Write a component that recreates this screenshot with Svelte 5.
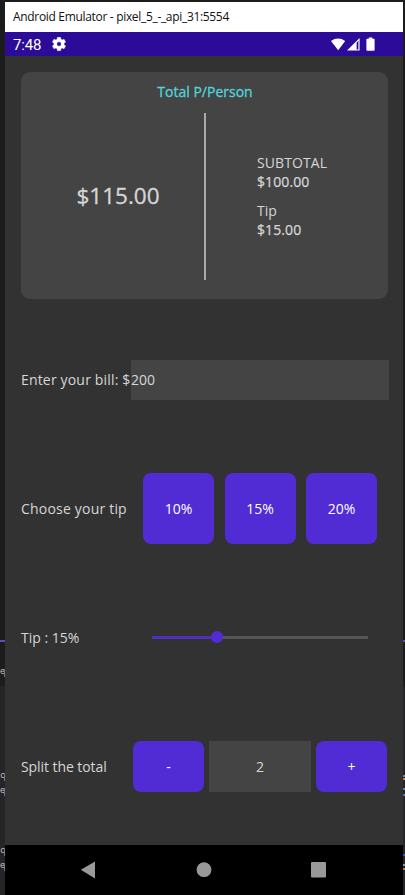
<script>
  const tips = [10, 15, 20];
  let bill = $state('200');
  let tip = $state(15);
  let people = $state(2);
  const fragments = [
    { t: 'e', y: 664 },
    { t: 'c', y: 768 },
    { t: 'e', y: 783 },
    { t: 'c', y: 843 },
    { t: 'e', y: 858 }
  ];
  const flecks = [
    { y: 775, c: '#7486a0' },
    { y: 778, c: '#b98a60' },
    { y: 788, c: '#7183a5' },
    { y: 794, c: '#60758e' },
    { y: 854, c: '#355ca0' },
    { y: 864, c: '#8598ab' },
    { y: 868, c: '#b87950' }
  ];
</script>

<div class="desktop">
  <div class="editor">
    <i class="pane"></i>
    <i class="rule"></i>
    {#each fragments as f}
      <span style="top:{f.y}px">{f.t}</span>
      <i class="stem" style="top:{f.y + 5}px"></i>
    {/each}
    {#each flecks as f}<i class="fleck" style="top:{f.y}px;background:{f.c}"></i>{/each}
  </div>

  <div class="window">
    <header class="title"><span>Android Emulator - pixel_5_-_api_31:5554</span></header>
    <div class="status">
      <span class="clock">7:48</span>
      <svg class="gear" width="14" height="14" viewBox="2 2 20 20"><path fill="#fff" stroke="#fff" stroke-width=".6" fill-rule="evenodd" d="M19.14 12.94c.04-.3.06-.61.06-.94 0-.32-.02-.64-.07-.94l2.03-1.58c.18-.14.23-.41.12-.61l-1.92-3.32c-.12-.22-.37-.29-.59-.22l-2.39.96c-.5-.38-1.03-.7-1.62-.94l-.36-2.54c-.04-.24-.24-.41-.48-.41h-3.84c-.24 0-.43.17-.47.41l-.36 2.54c-.59.24-1.13.57-1.62.94l-2.39-.96c-.22-.08-.47 0-.59.22L2.74 8.87c-.12.21-.08.47.12.61l2.03 1.58c-.05.3-.09.63-.09.94s.02.64.07.94l-2.03 1.58c-.18.14-.23.41-.12.61l1.92 3.32c.12.22.37.29.59.22l2.39-.96c.5.38 1.03.7 1.62.94l.36 2.54c.05.24.24.41.48.41h3.84c.24 0 .44-.17.47-.41l.36-2.54c.59-.24 1.13-.56 1.62-.94l2.39.96c.22.08.47 0 .59-.22l1.92-3.32c.12-.22.07-.47-.12-.61l-2.01-1.58zM12 15.2a3.2 3.2 0 1 1 0-6.4 3.2 3.2 0 0 1 0 6.4z" /></svg>
      <svg class="signals" width="46" height="14" viewBox="0 0 46 14" fill="#fff">
        <path d="M0 3.9Q7-1 14.2 3.9L7.2 13.3Z" />
        <path fill-rule="evenodd" d="M28.6 1V13.5H16ZM25.6 5.6v6.8h1.8V3.8Z" />
        <path d="M37.8 1.8V.6h3.6v1.2h1.4q.8 0 .8.8v10.4q0 .8-.8.8h-6.6q-.8 0-.8-.8V2.6q0-.8.8-.8Z" />
      </svg>
    </div>

    <main>
      <section class="card">
        <h1>Total P/Person</h1>
        <div class="split">
          <div class="total">$115.00</div>
          <div class="divider"></div>
          <dl>
            <dt class="sub">SUBTOTAL</dt>
            <dd>$100.00</dd>
            <dt>Tip</dt>
            <dd>$15.00</dd>
          </dl>
        </div>
      </section>

      <label class="row bill"><span>Enter your bill: $</span><input bind:value={bill} /></label>

      <div class="row tips">
        <span class="lbl">Choose your tip</span>
        {#each tips as t}<button onclick={() => (tip = t)}>{t}%</button>{/each}
      </div>

      <div class="row slide">
        <span class="lbl">Tip : {tip}%</span>
        <div class="track"><div class="fill" style="width:{tip * 2}%"></div><div class="thumb"></div><div class="rest"></div></div>
      </div>

      <div class="row people">
        <span class="lbl">Split the total</span>
        <button onclick={() => people--}>-</button>
        <output>{people}</output>
        <button onclick={() => people++}>+</button>
      </div>
    </main>

    <nav>
      <svg width="398" height="50" viewBox="0 0 398 50" fill="#999">
        <path d="M75.8 24.8 90 16.6v16.8Z" />
        <circle cx="199" cy="24.7" r="7.4" />
        <rect x="306" y="17" width="15" height="15.6" rx="1" />
      </svg>
    </nav>
  </div>
</div>

<style>
  :global(body) { background: #1e1e1e; overflow: hidden; }
  .desktop {
    position: relative;
    box-sizing: border-box;
    width: 405px;
    height: 895px;
    padding: 2px 0 0 5px;
    background: #1c1c1c;
    overflow: hidden;
    font-family: 'Open Sans', 'Noto Sans', sans-serif;
    font-size: 14px;
    line-height: 19px;
    color: #d6d6d6;
  }
  .editor { position: absolute; inset: 0; font: 8px/16px 'DejaVu Sans Mono', monospace; color: #c4c4c4; }
  .editor span { position: absolute; left: 0; }
  .stem { position: absolute; left: 4px; width: 1px; height: 8px; background: #777; }
  .pane { position: absolute; left: 0; right: 0; top: 686px; bottom: 0; background: #252528; }
  .rule { position: absolute; left: 0; right: 0; top: 640px; height: 2px; background: #5b4fb5; }
  .fleck { position: absolute; right: 0; width: 2px; height: 2px; }
  .window { position: relative; width: 398px; height: 893px; display: flex; flex-direction: column; }
  .title { height: 30px; background: #fff; color: #111; font-size: 12px; line-height: 30px; padding-left: 8px; white-space: nowrap; }
  .title span { display: inline-block; letter-spacing: -0.32px; }
  .status { height: 24px; background: #2b0b98; color: #fff; display: flex; align-items: center; padding-left: 8px; }
  .clock { font: 15px/24px Roboto, sans-serif; width: 39px; letter-spacing: -0.2px; padding-top: 1px; }
  .gear { display: block; }
  .signals { margin-left: auto; margin-right: 26px; }
  main { height: 789px; box-sizing: border-box; background: #323232; padding: 16px 14px 0 16px; }
  .card { box-sizing: border-box; width: 367px; height: 227px; border-radius: 9px; background: #444; padding-top: 10px; }
  h1 { margin: 0; padding-left: 1px; text-align: center; font-size: 14px; line-height: 19px; font-weight: 400; color: #53d3da; -webkit-text-stroke: 0.3px #53d3da; }
  .split { display: flex; margin-top: 12px; height: 167px; }
  .total { width: 183px; padding-left: 11px; box-sizing: border-box; text-align: center; font-size: 22.5px; line-height: 166px; -webkit-text-stroke: 0.3px #d6d6d6; }
  .divider { width: 2px; background: #aaa; }
  dl { margin: 40px 0 0 51px; }
  dt, dd { margin: 0; line-height: 19px; }
  .sub { letter-spacing: 0.1px; }
  dd { font-weight: 500; margin-bottom: 10px; -webkit-text-stroke: 0.25px #d6d6d6; letter-spacing: 0.1px; }
  .row { display: flex; align-items: center; white-space: nowrap; }
  .bill { margin-top: 61px; height: 40px; }
  .bill span { width: 110px; letter-spacing: 0.17px; padding-bottom: 1px; }
  input { width: 258px; height: 40px; box-sizing: border-box; border: 0; outline: 0; padding: 0 0 2px; background: #444; color: #d6d6d6; font: inherit; }
  button { box-sizing: border-box; width: 71px; height: 71px; border: 0; padding: 0; border-radius: 8px; background: #512bd4; color: #fff; font: inherit; }
  .tips { margin-top: 73px; gap: 10.5px; }
  .tips .lbl { width: 111.5px; letter-spacing: 0.2px; }
  .slide { margin-top: 83px; height: 20px; }
  .slide .lbl { width: 131px; }
  .track { width: 216px; height: 12px; display: flex; align-items: center; }
  .fill { height: 3px; background: #4e30be; flex-shrink: 0; }
  .thumb { width: 12px; height: 12px; border-radius: 50%; background: #512bd4; margin: 0 -6px; flex-shrink: 0; z-index: 1; }
  .rest { flex: 1; height: 3px; background: #565656; }
  .people { margin-top: 94px; gap: 5px; }
  .people .lbl { width: 107px; letter-spacing: -0.07px; }
  .people button { height: 51px; }
  output { width: 102px; height: 51px; background: #444; line-height: 51px; text-align: center; }
  nav { height: 50px; background: #000; }
  nav svg { display: block; }
</style>
